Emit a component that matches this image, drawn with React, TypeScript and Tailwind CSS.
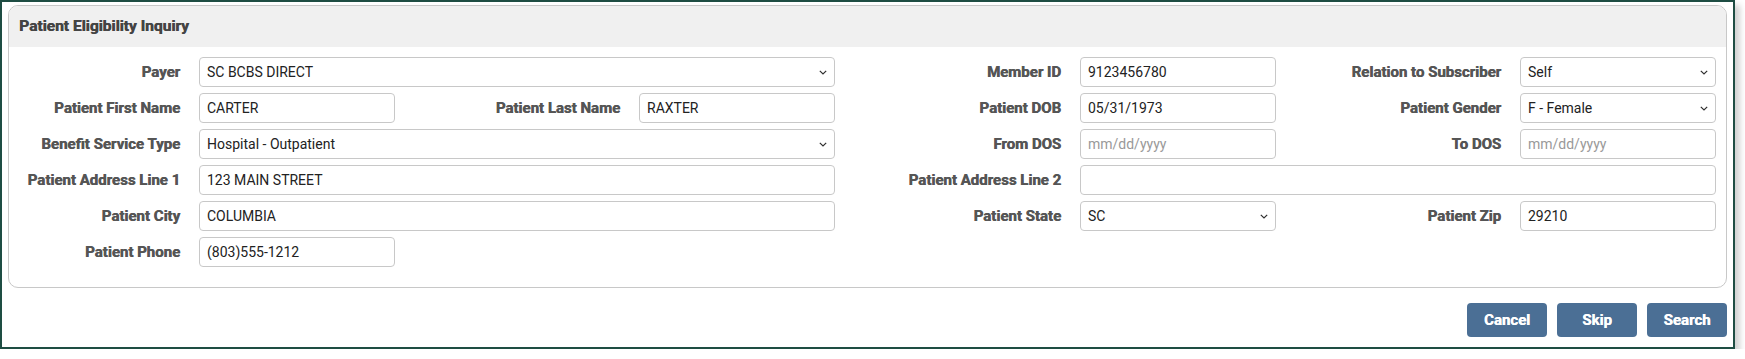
import type { ReactNode } from 'react';

const labelCls =
  'flex items-center justify-end pr-[19px] text-[15px] font-bold text-[#555] whitespace-nowrap [text-shadow:0.5px_0_0_#555]';
const fieldCls =
  'h-[30px] w-full rounded-[4px] border border-[#c8c8c8] bg-white px-[7px] text-[14px] text-[#222] outline-none placeholder:text-[#999]';

function Label({ children }: { children: ReactNode }) {
  return <div className={labelCls}>{children}</div>;
}

function TextField({ value, placeholder, span }: { value?: string; placeholder?: string; span?: boolean }) {
  return (
    <div className={span ? 'col-span-3' : ''}>
      <input type="text" readOnly defaultValue={value} placeholder={placeholder} className={fieldCls} />
    </div>
  );
}

function SelectField({ value, span }: { value: string; span?: boolean }) {
  return (
    <div className={`relative ${span ? 'col-span-3' : ''}`}>
      <select defaultValue={value} className={`${fieldCls} appearance-none pr-6`}>
        <option>{value}</option>
      </select>
      <svg
        className="pointer-events-none absolute right-[8px] top-[13px]"
        width="8"
        height="5"
        viewBox="0 0 8 5"
        fill="none"
      >
        <polyline points="0.8,0.8 4,4 7.2,0.8" stroke="#333" strokeWidth="1.2" />
      </svg>
    </div>
  );
}

export default function App() {
  return (
    <div className="bg-white" style={{ fontFamily: 'Roboto, "Liberation Sans", sans-serif' }}>
      <div className="w-[1735px] h-[349px] border-2 border-[#1e4d43] px-[6px] pt-[3px] pb-[10px] shadow-[5px_5px_6px_rgba(0,0,0,0.18)]">
        <div className="rounded-[10px] border border-[#c8c8c8] overflow-hidden">
          <div className="h-[41px] bg-[#f0f0f0] flex items-center pl-[10px] text-[15.5px] font-bold text-[#444] [text-shadow:0.5px_0_0_#444]">
            Patient Eligibility Inquiry
          </div>
          <div className="pt-[10px] pb-[20px]">
            <div className="grid grid-cols-[190px_196px_244px_196px_245px_196px_244px_196px] gap-y-[6px]">
              <Label>Payer</Label>
              <SelectField value="SC BCBS DIRECT" span />
              <Label>Member ID</Label>
              <TextField value="9123456780" />
              <Label>Relation to Subscriber</Label>
              <SelectField value="Self" />

              <Label>Patient First Name</Label>
              <TextField value="CARTER" />
              <Label>Patient Last Name</Label>
              <TextField value="RAXTER" />
              <Label>Patient DOB</Label>
              <TextField value="05/31/1973" />
              <Label>Patient Gender</Label>
              <SelectField value="F - Female" />

              <Label>Benefit Service Type</Label>
              <SelectField value="Hospital - Outpatient" span />
              <Label>From DOS</Label>
              <TextField placeholder="mm/dd/yyyy" />
              <Label>To DOS</Label>
              <TextField placeholder="mm/dd/yyyy" />

              <Label>Patient Address Line 1</Label>
              <TextField value="123 MAIN STREET" span />
              <Label>Patient Address Line 2</Label>
              <TextField value="" span />

              <Label>Patient City</Label>
              <TextField value="COLUMBIA" span />
              <Label>Patient State</Label>
              <SelectField value="SC" />
              <Label>Patient Zip</Label>
              <TextField value="29210" />

              <Label>Patient Phone</Label>
              <TextField value="(803)555-1212" />
            </div>
          </div>
        </div>
        <div className="mt-[15px] flex justify-end gap-[10px]">
          {['Cancel', 'Skip', 'Search'].map((b) => (
            <button
              key={b}
              className="h-[34px] w-[80px] rounded-[4px] bg-[#4b6f95] text-[15px] font-bold text-white [text-shadow:0.4px_0_0_#fff]"
            >
              {b}
            </button>
          ))}
        </div>
      </div>
    </div>
  );
}
